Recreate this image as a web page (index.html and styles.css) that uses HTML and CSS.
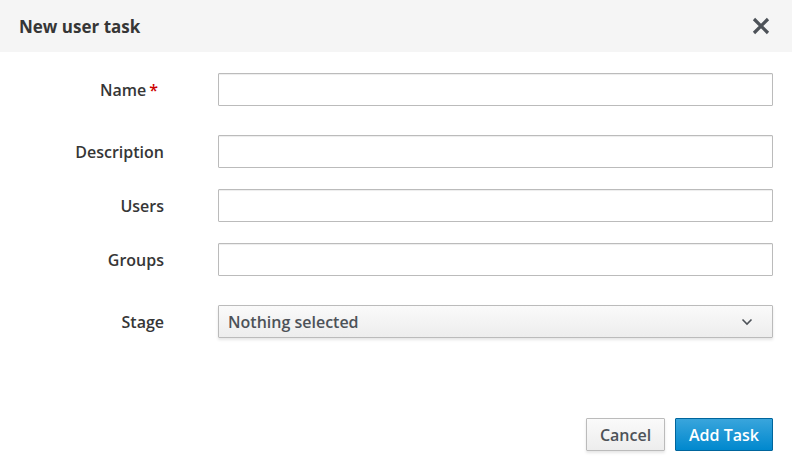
FILE: index.html
```html
<!DOCTYPE html>
<html lang="en">
<head>
    <meta charset="UTF-8">
    <title>New user task</title>
    <link rel="stylesheet" href="styles.css">
</head>
<body>
    <div class="modal">
        <div class="modal-header">
            <h4 class="modal-title">New user task</h4>
            <button class="close" aria-label="Close">
                <svg width="18" height="18" viewBox="0 0 18 18">
                    <path d="M2 2 L16 16 M16 2 L2 16" stroke="#4d5258" stroke-width="3.2" fill="none"/>
                </svg>
            </button>
        </div>

        <form class="modal-body">
            <div class="form-row row-name">
                <label class="control-label required">Name</label>
                <input type="text" class="form-control">
            </div>
            <div class="form-row row-desc">
                <label class="control-label">Description</label>
                <input type="text" class="form-control">
            </div>
            <div class="form-row">
                <label class="control-label">Users</label>
                <input type="text" class="form-control">
            </div>
            <div class="form-row">
                <label class="control-label">Groups</label>
                <input type="text" class="form-control">
            </div>
            <div class="form-row row-stage">
                <label class="control-label">Stage</label>
                <button type="button" class="select-toggle">
                    <span>Nothing selected</span>
                    <svg width="12" height="8" viewBox="0 0 12 8">
                        <path d="M1.5 1.5 L6 6 L10.5 1.5" stroke="#4d5258" stroke-width="1.6" fill="none"/>
                    </svg>
                </button>
            </div>
        </form>

        <div class="modal-footer">
            <button class="btn btn-default">Cancel</button>
            <button class="btn btn-primary">Add Task</button>
        </div>
    </div>
</body>
</html>
```

FILE: styles.css
```css
body {
    margin: 0;
    font-family: 'Open Sans', 'Noto Sans', sans-serif;
    color: #363636;
    background-color: #fff;
}
.modal {
    width: 792px;
    height: 460px;
    display: flex;
    flex-direction: column;
}
.modal-header {
    height: 52px;
    box-sizing: border-box;
    background-color: #f5f5f5;
    display: flex;
    align-items: center;
    justify-content: space-between;
    padding: 0 22px 0 19px;
}
.modal-title {
    margin: 0;
    font-size: 17px;
    font-weight: 700;
    color: #363636;
}
.close {
    background: none;
    border: 0;
    padding: 0;
    display: flex;
    cursor: pointer;
}
.modal-body {
    padding: 21px 19px 0 0;
    margin: 0;
    display: flex;
    flex-direction: column;
    gap: 21px;
}
.form-row {
    display: grid;
    grid-template-columns: 164px 1fr;
    column-gap: 54px;
    align-items: center;
}
.row-desc,
.row-stage {
    margin-top: 8px;
}
.control-label {
    text-align: right;
    font-size: 16px;
    font-weight: 600;
    color: #363636;
}
.control-label.required {
    padding-right: 6px;
}
.control-label.required::after {
    content: '*';
    color: #c00;
    margin-left: 3px;
}
.form-control {
    height: 33px;
    box-sizing: border-box;
    border: 1px solid #bbb;
    border-radius: 1px;
    box-shadow: inset 0 1px 1px rgba(3,3,3,0.075);
    font-family: inherit;
    font-size: 16px;
    padding: 2px 8px;
    margin: 0;
}
.select-toggle {
    height: 33px;
    box-sizing: border-box;
    border: 1px solid #bbb;
    border-radius: 1px;
    background: linear-gradient(to bottom, #fafafa 0%, #ededed 100%);
    box-shadow: 0 2px 3px rgba(3,3,3,0.1);
    display: flex;
    align-items: center;
    justify-content: space-between;
    padding: 0 19px 0 9px;
    font-family: inherit;
    font-size: 16px;
    font-weight: 600;
    color: #4d5258;
    cursor: pointer;
}
.modal-footer {
    margin-top: auto;
    padding: 0 19px 9px 0;
    display: flex;
    justify-content: flex-end;
    gap: 10px;
}
.btn {
    height: 33px;
    box-sizing: border-box;
    border-radius: 1px;
    font-family: inherit;
    font-size: 16px;
    font-weight: 600;
    padding: 0;
    cursor: pointer;
}
.btn-default {
    width: 79px;
    background: linear-gradient(to bottom, #fafafa 0%, #ededed 100%);
    border: 1px solid #bbb;
    color: #4d5258;
    box-shadow: 0 2px 3px rgba(3,3,3,0.1);
}
.btn-primary {
    width: 98px;
    background: linear-gradient(to bottom, #39a5dc 0%, #0088ce 100%);
    border: 1px solid #00659c;
    color: #fff;
}
```
